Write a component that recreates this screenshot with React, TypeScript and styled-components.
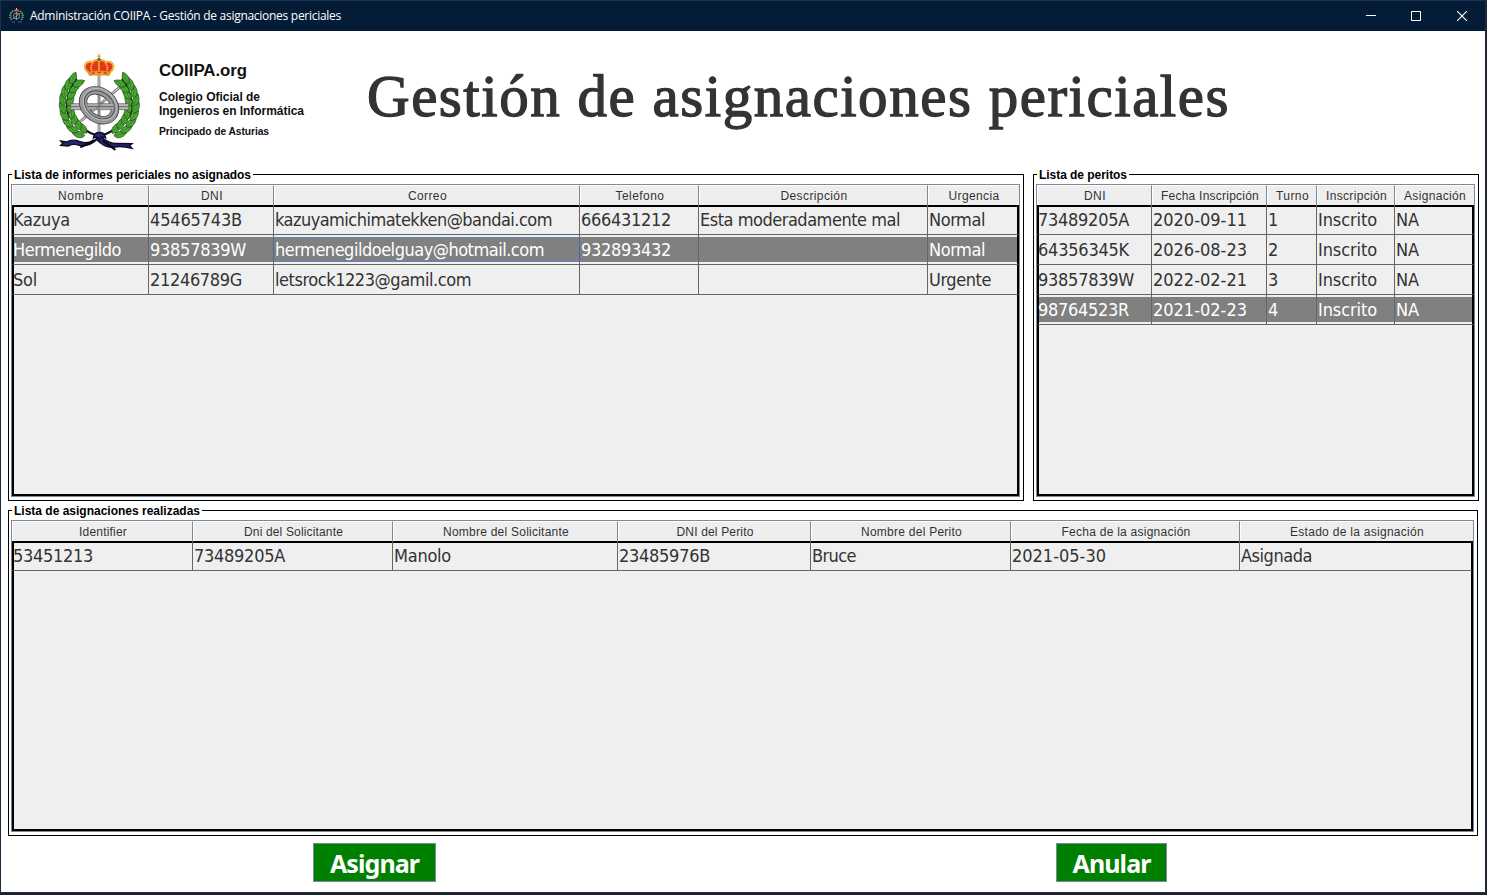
import React, { useLayoutEffect, useRef, useState } from "react";
import styled, { createGlobalStyle, css } from "styled-components";

const tahoma = `"DejaVu Sans Condensed", "DejaVu Sans", sans-serif`;
const arial = `"Liberation Sans", Arial, sans-serif`;

const GlobalStyle = createGlobalStyle`
  * { box-sizing: border-box; }
  html, body { margin: 0; padding: 0; background: #222428; overflow: hidden; }
`;

const Desktop = styled.div`
  width: 1487px;
  height: 895px;
  padding: 0 2px 3px 0;
  background: #222428;
`;

const Window = styled.div`
  width: 1485px;
  height: 893px;
  display: flex;
  flex-direction: column;
  background: #fff;
  border-left: 1px solid #1b2f4b;
  border-bottom: 1px solid #1b2f4b;
  box-shadow: 1px 0 0 #1b2a40;
`;

const TitleBar = styled.header`
  flex: none;
  display: flex;
  align-items: center;
  height: 31px;
  padding-left: 7px;
  background: #051c36;
  border-top: 1px solid #1c3350;
  color: #fff;
  font: 12px/16px "Open Sans", "Noto Sans", sans-serif;
`;

const TitleText = styled.div`
  flex: 1;
  padding-left: 5px;
`;

const WindowButton = styled.div`
  width: 46px;
  height: 30px;
  display: flex;
  align-items: center;
  justify-content: center;
  &:nth-last-child(3) { padding-left: 2px; }
`;

const Banner = styled.div`
  flex: none;
  display: flex;
  height: 137px;
  padding: 17px 0 0 49px;
`;

const LogoText = styled.div`
  width: 217px;
  padding: 14px 0 0 9px;
  color: #111;
  font-family: ${arial};
  font-weight: bold;
`;

const LogoLine = styled.div<{ $size: number; $height: number; $gap?: number }>`
  font-size: ${(p) => p.$size}px;
  line-height: ${(p) => p.$height}px;
  margin-top: ${(p) => p.$gap ?? 0}px;
`;

const Heading = styled.h1`
  margin: 0;
  padding-top: 12px;
  color: #333;
  font: 400 59px/72px "Liberation Serif", serif;
  -webkit-text-stroke: 1.3px #333;
`;

const PanelRow = styled.div`
  flex: none;
  display: flex;
  gap: 9px;
  height: 336px;
  padding-left: 7px;
`;

const Panel = styled.fieldset<{ $width: number; $height: number }>`
  display: flex;
  flex-direction: column;
  margin: 0;
  min-width: 0;
  width: ${(p) => p.$width}px;
  height: ${(p) => p.$height}px;
  padding: 3px 3px 3px 2px;
  border: 1px solid #000;
`;

const Caption = styled.legend`
  margin-left: 1px;
  padding: 0 2px;
  height: 13px;
  color: #000;
  font: bold 12px/14px ${arial};
`;

const Table = styled.div`
  flex: 1;
  display: flex;
  flex-direction: column;
  border: 1px solid #7a8a99;
`;

const columns = css<{ $cols: number[] }>`
  display: grid;
  grid-template-columns: ${(p) => p.$cols.map((c) => c + "px").join(" ")};
`;

const HeaderRow = styled.div<{ $cols: number[] }>`
  ${columns}
  height: 20px;
`;

const HeaderCell = styled.div`
  border: solid;
  border-width: 1px;
  border-color: #fff #7a8a99 #7a8a99 #fff;
  padding-left: 1px;
  background: #eee;
  color: #333;
  text-align: center;
  font: 12px/20px ${arial};
  white-space: nowrap;
  &:last-child { border-right-color: #eee; }
`;

const Body = styled.div`
  flex: 1;
  border: 2px solid #000;
  background: #efefef;
`;

const Row = styled.div<{ $cols: number[] }>`
  ${columns}
  height: 30px;
  margin: 0 -2px;
  &:first-child { margin-top: -2px; }
`;

const selectedFill = css`
  background: linear-gradient(#efefef 2px, #808080 2px, #808080 27px, #efefef 27px) padding-box;
`;

const focusRing = css`
  box-shadow: inset 0 2px #efefef, inset 0 -2px #efefef,
    inset 1px 0 #6382bf, inset -1px 0 #6382bf, inset 0 3px #6382bf, inset 0 -3px #6382bf;
`;

const Cell = styled.div<{ $selected?: boolean; $focused?: boolean }>`
  height: 30px;
  padding: 2px 0 2px 1px;
  border-right: 1px solid #666;
  color: ${(p) => (p.$selected ? "#fff" : "#333")};
  font: 18px/25px ${tahoma};
  white-space: nowrap;
  border-bottom: 1px solid #666;
  ${(p) => p.$selected && selectedFill}
  ${(p) => p.$focused && focusRing}
  &:first-child {
    border-left: 2px solid #000;
    padding-left: 0;
    text-indent: -1px;
  }
  &:last-child { border-right: 2px solid #000; }
`;

const Actions = styled.footer`
  display: flex;
  gap: 620px;
  padding: 3px 0 0 312px;
`;

const Button = styled.button<{ $width: number }>`
  width: ${(p) => p.$width}px;
  height: 39px;
  padding: 2px 0 0;
  border: 1px solid #7a8a99;
  background: #008000;
  color: #fff;
  font: bold 25px/35px "Noto Sans", ${tahoma};
`;

const Spaced = styled.span`
  display: inline-block;
  white-space: nowrap;
  text-indent: 0;
`;

/* Spreads the letters so that the text takes the given width. */
function Fit({ w, children }: { w: number; children: string }) {
  const ref = useRef<HTMLSpanElement>(null);
  const [spacing, setSpacing] = useState(0);
  useLayoutEffect(() => {
    const natural = ref.current!.getBoundingClientRect().width;
    setSpacing((w - natural) / children.length);
  }, [w, children]);
  return <Spaced ref={ref} style={{ letterSpacing: spacing }}>{children}</Spaced>;
}

type Item = [string, number];
interface GridData {
  title: Item;
  cols: number[];
  head: Item[];
  rows: Item[][];
  selected?: number;
  focused?: number;
}

const informes: GridData = {
  title: ["Lista de informes periciales no asignados", 237],
  cols: [137, 125, 306, 119, 229, 91],
  head: [["Nombre", 46], ["DNI", 22], ["Correo", 39], ["Telefono", 49], ["Descripción", 67], ["Urgencia", 51]],
  rows: [
    [["Kazuya", 57], ["45465743B", 92], ["kazuyamichimatekken@bandai.com", 277], ["666431212", 90], ["Esta moderadamente mal", 200], ["Normal", 56]],
    [["Hermenegildo", 108], ["93857839W", 96], ["hermenegildoelguay@hotmail.com", 269], ["932893432", 90], ["", 0], ["Normal", 56]],
    [["Sol", 24], ["21246789G", 92], ["letsrock1223@gamil.com", 196], ["", 0], ["", 0], ["Urgente", 62]],
  ],
  selected: 1,
  focused: 2,
};

const peritos: GridData = {
  title: ["Lista de peritos", 88],
  cols: [115, 115, 50, 78, 79],
  head: [["DNI", 22], ["Fecha Inscripción", 98], ["Turno", 33], ["Inscripción", 61], ["Asignación", 62]],
  rows: [
    [["73489205A", 91], ["2020-09-11", 94], ["1", 10], ["Inscrito", 59], ["NA", 23]],
    [["64356345K", 91], ["2026-08-23", 94], ["2", 10], ["Inscrito", 59], ["NA", 23]],
    [["93857839W", 96], ["2022-02-21", 94], ["3", 10], ["Inscrito", 59], ["NA", 23]],
    [["98764523R", 91], ["2021-02-23", 94], ["4", 10], ["Inscrito", 59], ["NA", 23]],
  ],
  selected: 3,
};

const asignaciones: GridData = {
  title: ["Lista de asignaciones realizadas", 186],
  cols: [181, 200, 225, 193, 200, 229, 233],
  head: [["Identifier", 48], ["Dni del Solicitante", 99], ["Nombre del Solicitante", 126], ["DNI del Perito", 77], ["Nombre del Perito", 101], ["Fecha de la asignación", 129], ["Estado de la asignación", 134]],
  rows: [
    [["53451213", 80], ["73489205A", 91], ["Manolo", 57], ["23485976B", 91], ["Bruce", 44], ["2021-05-30", 94], ["Asignada", 71]],
  ],
};

function DataPanel({ data, width, height }: { data: GridData; width: number; height: number }) {
  return (
    <Panel $width={width} $height={height}>
      <Caption><Fit w={data.title[1]}>{data.title[0]}</Fit></Caption>
      <Table>
        <HeaderRow $cols={data.cols}>
          {data.head.map(([t, w]) => <HeaderCell key={t}><Fit w={w}>{t}</Fit></HeaderCell>)}
        </HeaderRow>
        <Body>
          {data.rows.map((row, r) => (
            <Row key={r} $cols={data.cols}>
              {row.map(([t, w], c) => (
                <Cell key={c} $selected={data.selected === r} $focused={data.selected === r && data.focused === c}>
                  {t && <Fit w={w}>{t}</Fit>}
                </Cell>
              ))}
            </Row>
          ))}
        </Body>
      </Table>
    </Panel>
  );
}

const leafPath = "M-18 0C-10 -13 8 -12 21 0C8 12 -10 12 -18 0Z";

function Branch() {
  const leaves = [];
  for (let i = 0; i < 9; i++) {
    const deg = 124 + i * 12.5;
    const a = (deg * Math.PI) / 180;
    for (const side of [1, -1]) {
      const r = 99 + side * 11;
      leaves.push(
        <g key={`${i}${side}`} transform={`translate(${148 + r * Math.cos(a)} ${168 + r * Math.sin(a)}) rotate(${deg + 90 - side * 20})`}>
          <path d={leafPath} fill="#48a82f" stroke="#1a4712" strokeWidth="2" />
          <path d="M-14 1Q2 -1 17 0" fill="none" stroke="#2b7a1e" strokeWidth="1.6" />
        </g>
      );
    }
  }
  return (
    <g>
      <path d="M150 266Q85 245 55 200Q40 150 80 92" fill="none" stroke="#111" strokeWidth="6" />
      {leaves}
    </g>
  );
}

function Crest({ size, height }: { size: number; height: number }) {
  return (
    <svg width={size} height={height} viewBox="0 0 300 330">
      <path d="M147 80V262M92 220L238 92" stroke="#555" strokeWidth="8" />
      <path d="M147 80V262M92 220L238 92" stroke="#bbb" strokeWidth="5" />
      <Branch />
      <g transform="matrix(-1 0 0 1 296 0)"><Branch /></g>
      <path d="M62 167H236V185H62Z" fill="#bbb" stroke="#555" strokeWidth="2" />
      <path d="M62 176H236" stroke="#666" strokeWidth="3" />
      <g transform="rotate(38 147 172)" fill="none">
        <ellipse cx="147" cy="172" rx="52" ry="40" stroke="#333" strokeWidth="25" />
        <ellipse cx="147" cy="172" rx="52" ry="40" stroke="#96989b" strokeWidth="21" />
        <ellipse cx="147" cy="170" rx="49" ry="38" stroke="#555" strokeWidth="3" />
        <ellipse cx="147" cy="168" rx="54" ry="43" stroke="#bcbec0" strokeWidth="3" />
      </g>
      <path d="M112 171H190M112 181H190" stroke="#aaa" strokeWidth="6" />
      <path d="M114 176H190M138 183L160 162M147 140V205" stroke="#666" strokeWidth="2.5" />
      <path d="M119 76C94 60 104 38 128 42Q137 33 147 38Q157 33 167 42C192 38 199 60 176 76Q147 84 119 76Z" fill="#e5351c" stroke="#f0b030" strokeWidth="6" />
      <path d="M128 46Q119 56 127 74M166 46Q177 56 169 74M147 40V76" fill="none" stroke="#f8c83d" strokeWidth="5" strokeDasharray="4 2" />
      <path d="M115 74Q147 63 180 74L177 83Q147 75 118 83Z" fill="#eda030" stroke="#d98020" strokeWidth="2" />
      <path d="M125 77L134 74M143 73H153M161 74L171 77" stroke="#d22a19" strokeWidth="4" />
      <path d="M147 18V38M142 25H152" stroke="#d6a72c" strokeWidth="4" />
      <circle cx="147" cy="34" r="5" fill="#417d30" />
      <path d="M146 266Q122 292 88 280Q66 272 50 282L32 279L38 286L32 292L56 294Q68 285 90 293Q119 295 140 275Q164 301 192 298Q210 292 246 301L239 293L246 287L205 286Q182 290 154 268Z" fill="#26246b" stroke="#0c0c29" strokeWidth="4" />
      <path d="M132 276Q116 288 91 298M158 278Q176 290 196 306" fill="none" stroke="#080812" strokeWidth="6" />
      <path d="M130 270Q133 252 147 254Q163 251 167 270Q153 263 148 274Q143 264 130 270Z" fill="#29267a" stroke="#0c0c29" strokeWidth="4" />
    </svg>
  );
}

function TinyCrest() {
  return (
    <svg width="17" height="18" viewBox="0 0 17 18">
      <path d="M5 4Q0 8 4 13M12 4Q17 8 13 13" fill="none" stroke="#7bc050" strokeWidth="2" strokeDasharray="1.2 1" />
      <circle cx="8.5" cy="9" r="3" fill="none" stroke="#8b9299" />
      <path d="M5 12L12 6M8.5 5V13" stroke="#b0b5b8" strokeWidth=".7" />
      <path d="M6 3.5H11" stroke="#e65330" strokeWidth="2" />
      <path d="M8.5 1V3" stroke="#edc45d" />
      <path d="M4 15H7M10 15H14" stroke="#555098" />
    </svg>
  );
}

export default function App() {
  return (
    <>
      <GlobalStyle />
      <Desktop>
        <Window>
          <TitleBar>
            <TinyCrest />
            <TitleText><Fit w={311}>Administración COIIPA - Gestión de asignaciones periciales</Fit></TitleText>
            <WindowButton><svg width="10" height="10"><path d="M0 4.5H10" stroke="#fff" /></svg></WindowButton>
            <WindowButton><svg width="10" height="10"><path d="M.5 .5H9.5V9.5H.5Z" fill="none" stroke="#fff" /></svg></WindowButton>
            <WindowButton><svg width="10" height="10"><path d="M0 0L10 10M10 0L0 10" stroke="#fff" strokeWidth="1.1" /></svg></WindowButton>
          </TitleBar>
          <Banner>
            <Crest size={100} height={110} />
            <LogoText>
              <LogoLine $size={16.8} $height={18}><Fit w={88}>COIIPA.org</Fit></LogoLine>
              <LogoLine $size={12} $height={14} $gap={10}><Fit w={101}>Colegio Oficial de</Fit></LogoLine>
              <LogoLine $size={12} $height={14}><Fit w={145}>Ingenieros en Informática</Fit></LogoLine>
              <LogoLine $size={10.3} $height={12} $gap={8}><Fit w={110}>Principado de Asturias</Fit></LogoLine>
            </LogoText>
            <Heading><Fit w={863}>Gestión de asignaciones periciales</Fit></Heading>
          </Banner>
          <PanelRow>
            <DataPanel data={informes} width={1016} height={333} />
            <DataPanel data={peritos} width={446} height={333} />
          </PanelRow>
          <PanelRow>
            <DataPanel data={asignaciones} width={1470} height={332} />
          </PanelRow>
          <Actions>
            <Button $width={123}><Fit w={89}>Asignar</Fit></Button>
            <Button $width={111}><Fit w={78}>Anular</Fit></Button>
          </Actions>
        </Window>
      </Desktop>
    </>
  );
}
